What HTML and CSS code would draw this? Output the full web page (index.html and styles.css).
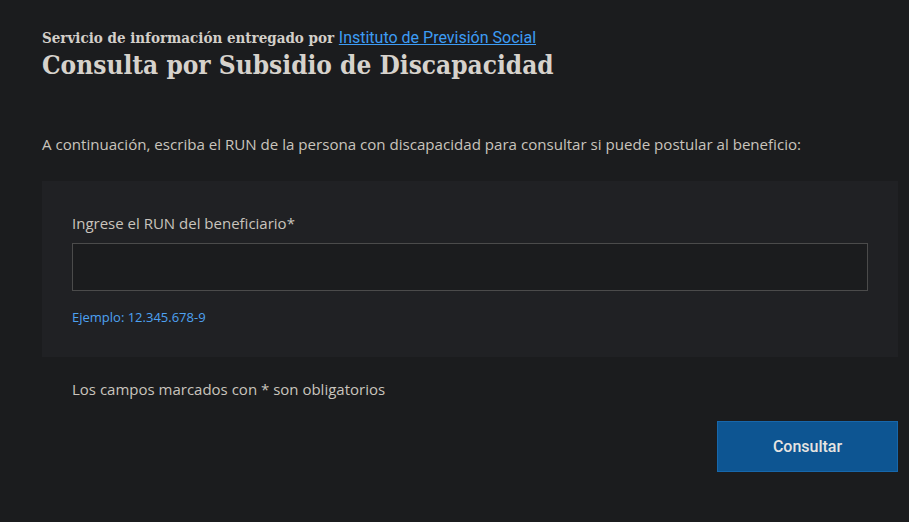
FILE: index.html
```html
<!DOCTYPE html>
<html lang="es">
<head>
<meta charset="utf-8">
<title>Consulta por Subsidio de Discapacidad</title>
<link rel="stylesheet" href="styles.css">
</head>
<body>
<main class="page">
  <header class="head">
    <p class="provider">Servicio de información entregado por <a href="#" class="provider-link">Instituto de Previsión Social</a></p>
    <h1 class="title">Consulta por Subsidio de Discapacidad</h1>
  </header>
  <p class="intro">A continuación, escriba el RUN de la persona con discapacidad para consultar si puede postular al beneficio:</p>
  <form class="form">
    <section class="panel">
      <label class="label" for="run">Ingrese el RUN del beneficiario*</label>
      <input class="input" id="run" type="text">
      <p class="hint">Ejemplo: 12.345.678-9</p>
    </section>
    <p class="required">Los campos marcados con * son obligatorios</p>
    <div class="actions">
      <button type="button" class="btn">Consultar</button>
    </div>
  </form>
</main>
</body>
</html>
```
FILE: styles.css
```css
html, body {
  margin: 0;
  padding: 0;
  background: #1b1c1e;
}
body {
  font-family: "Open Sans", "Noto Sans", sans-serif;
  color: #c9c4bd;
}
.page {
  padding: 28px 11px 0 42px;
}
.head {
  margin: 0;
}
.provider {
  margin: 0;
  font-family: "DejaVu Serif Condensed", "DejaVu Serif", serif;
  font-weight: bold;
  font-size: 15px;
  line-height: 20px;
  color: #d3cfc9;
}
.provider-link {
  font-family: Roboto, sans-serif;
  font-weight: 400;
  font-size: 16px;
  color: #3d9cf5;
  text-decoration: underline;
}
.title {
  margin: 0;
  font-family: "DejaVu Serif Condensed", "DejaVu Serif", serif;
  font-weight: bold;
  font-size: 26px;
  line-height: 34px;
  color: #d6d2cc;
}
.intro {
  margin: 50px 0 0;
  font-size: 15.1px;
  line-height: 24px;
}
.form {
  margin-top: 25px;
}
.panel {
  background: #202124;
  padding: 30px;
}
.label {
  display: block;
  font-size: 15px;
  line-height: 24px;
  margin-bottom: 8px;
}
.input {
  display: block;
  box-sizing: border-box;
  width: 100%;
  height: 48px;
  background: #1b1c1e;
  border: 1px solid #4b4b4b;
  margin: 0;
}
.hint {
  margin: 16px 0 0;
  font-size: 13px;
  line-height: 20px;
  color: #4ea2f2;
}
.required {
  margin: 20px 0 0 30px;
  font-size: 15px;
  line-height: 24px;
}
.actions {
  display: flex;
  justify-content: flex-end;
  margin-top: 20px;
}
.btn {
  width: 181px;
  height: 51px;
  background: #0d5592;
  border: 1px solid #1767ab;
  color: #e6e4e1;
  font-family: Roboto, sans-serif;
  font-weight: 500;
  font-size: 16px;
}
```
